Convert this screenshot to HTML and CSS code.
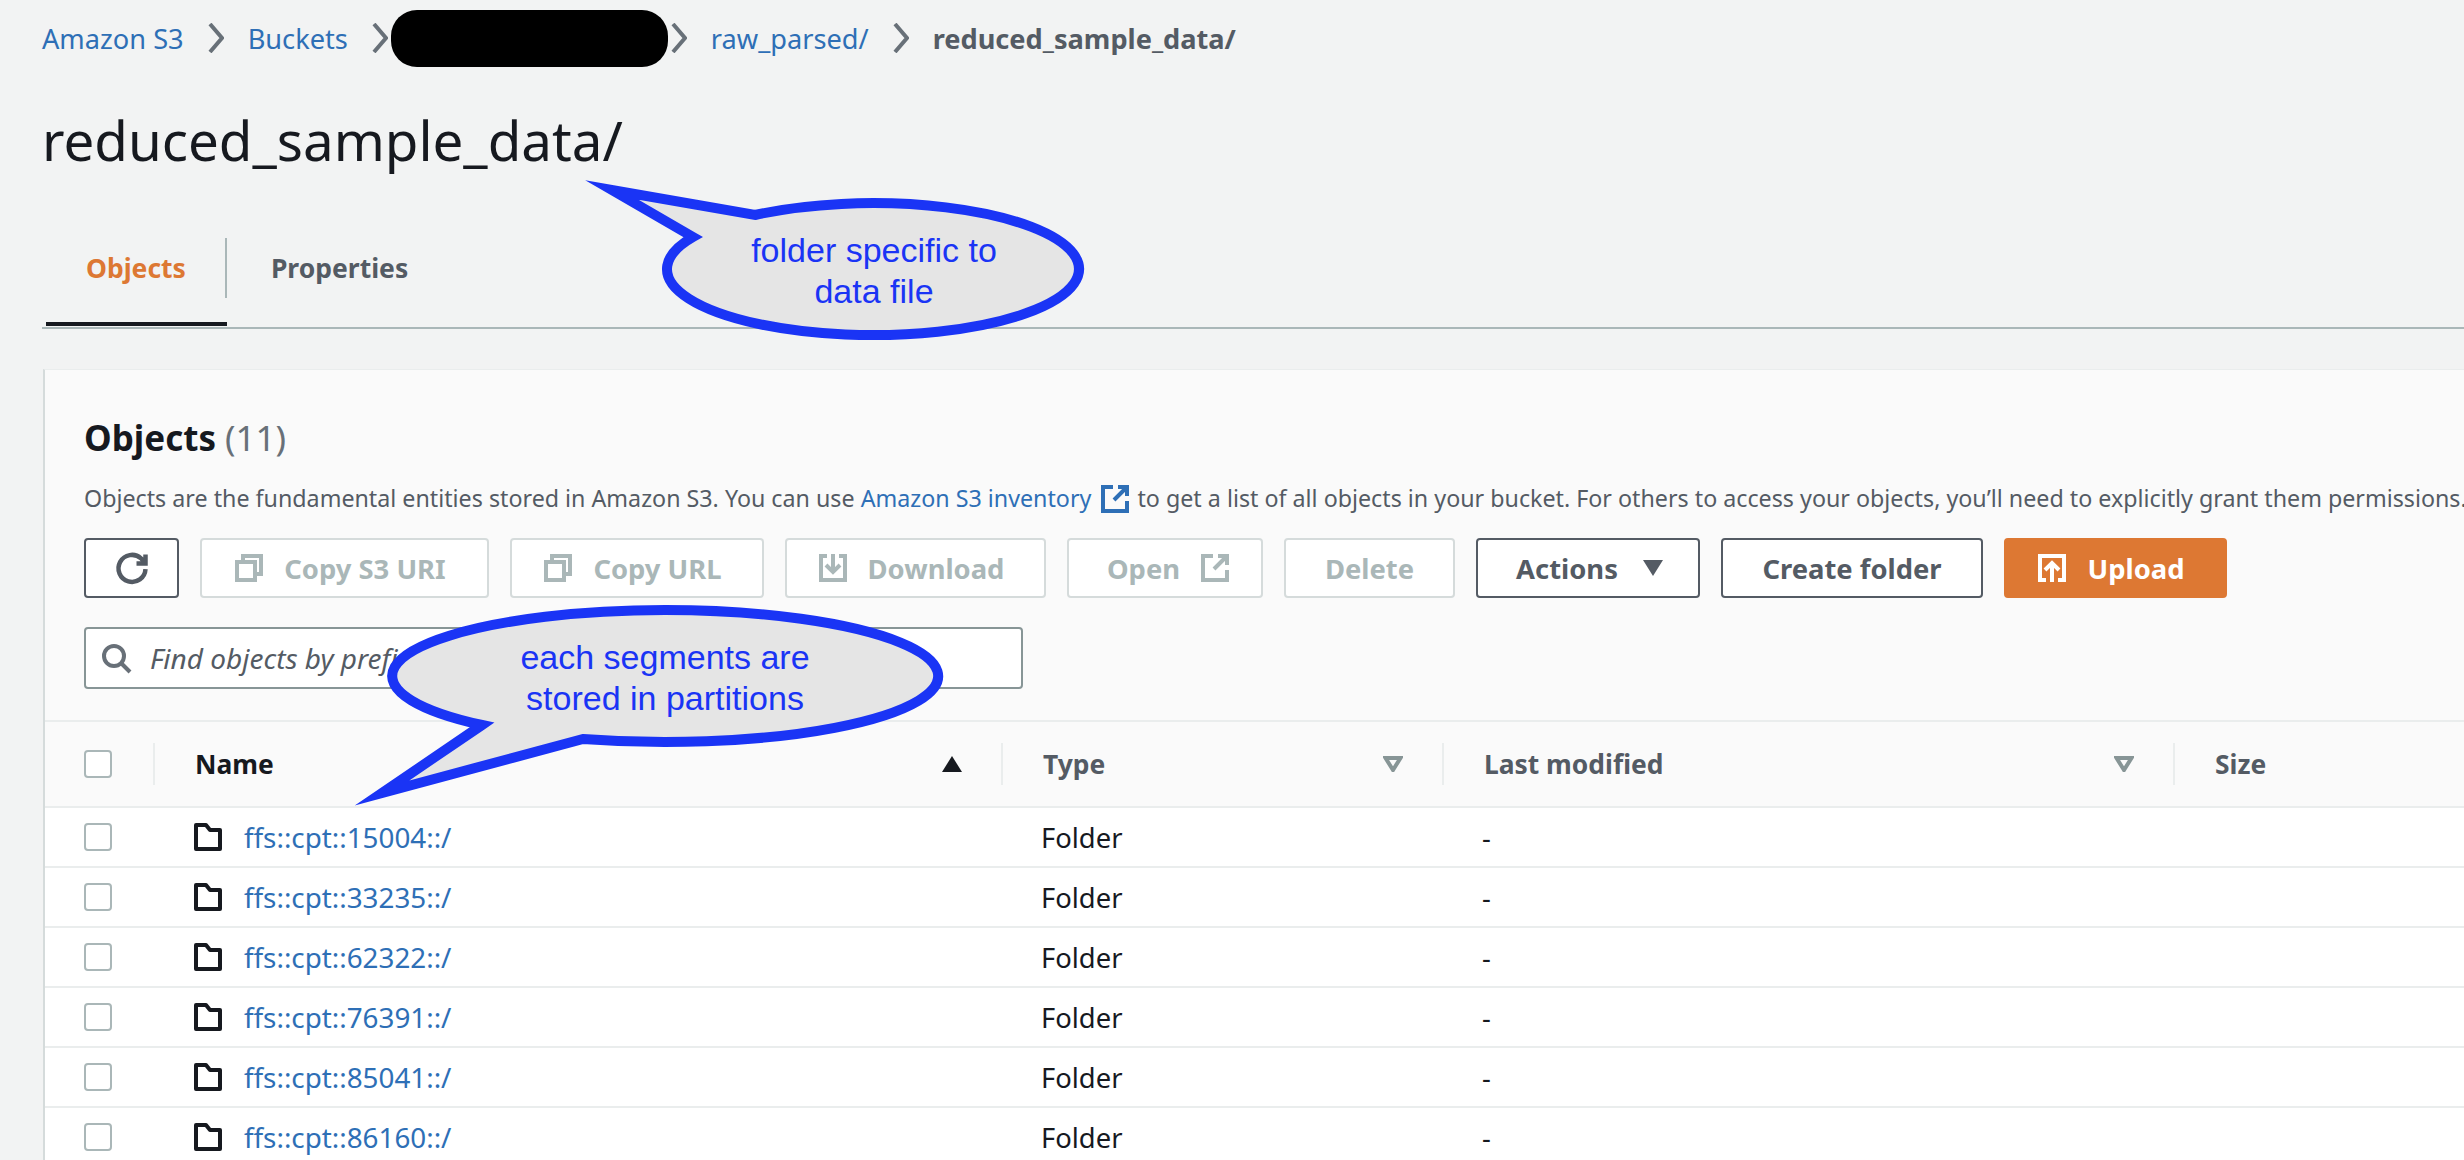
FILE: index.html
```html
<!DOCTYPE html>
<html lang="en">
<head>
    <meta charset="UTF-8">
    <title>reduced_sample_data/ - S3 bucket</title>
    <link rel="stylesheet" href="styles.css">
</head>
<body>
    <nav class="breadcrumbs">
        <a href="#">Amazon S3</a>
        <svg class="chevron" viewBox="0 0 16 30"><path d="M2 1l12 14L2 29"/></svg>
        <a href="#">Buckets</a>
        <svg class="chevron" viewBox="0 0 16 30"><path d="M2 1l12 14L2 29"/></svg>
        <span class="redacted"></span>
        <svg class="chevron" viewBox="0 0 16 30"><path d="M2 1l12 14L2 29"/></svg>
        <a href="#">raw_parsed/</a>
        <svg class="chevron" viewBox="0 0 16 30"><path d="M2 1l12 14L2 29"/></svg>
        <span class="current">reduced_sample_data/</span>
    </nav>

    <h1 class="page-title">reduced_sample_data/</h1>

    <div class="tabs">
        <div class="tab tab-active"><span class="tab-label">Objects</span></div>
        <div class="tab"><span class="tab-label">Properties</span></div>
    </div>

    <section class="panel">
        <div class="panel-head">
            <h2>Objects <span class="count">(11)</span></h2>
            <p class="desc">Objects are the fundamental entities stored in Amazon S3. You can use <a href="#">Amazon S3 inventory<svg class="icon ext-link" viewBox="0 0 16 16"><path d="M7 2H2v12h12V9M9.500 2H14v4.500M14 2L7.500 8.500"/></svg></a> to get a list of all objects in your bucket. For others to access your objects, you’ll need to explicitly grant them permissions.</p>

            <div class="toolbar">
                <button class="btn btn-refresh"><svg class="icon icon-lg" viewBox="0 0 16 16"><path d="M14 8.500a6 6 0 1 1-2-4.800L14 6M14 2v4h-4"/></svg></button>
                <button class="btn btn-copy-uri" disabled><svg class="icon icon-before" viewBox="0 0 16 16"><path d="M5 5V2h9v9h-3M2 5h9v9H2z"/></svg>Copy S3 URI</button>
                <button class="btn btn-copy-url" disabled><svg class="icon icon-before" viewBox="0 0 16 16"><path d="M5 5V2h9v9h-3M2 5h9v9H2z"/></svg>Copy URL</button>
                <button class="btn btn-download" disabled><svg class="icon icon-before" viewBox="0 0 16 16"><path d="M5 2H2v12h12V2h-3M8 1v9M4.500 6.500L8 10l3.500-3.500"/></svg>Download</button>
                <button class="btn btn-open" disabled>Open<svg class="icon icon-after" viewBox="0 0 16 16"><path d="M7 2H2v12h12V9M9.500 2H14v4.500M14 2L7.500 8.500"/></svg></button>
                <button class="btn btn-delete" disabled>Delete</button>
                <button class="btn btn-actions">Actions<svg class="caret" viewBox="0 0 20 16"><path d="M0 0h20L10 16z"/></svg></button>
                <button class="btn btn-create">Create folder</button>
                <button class="btn btn-primary"><svg class="icon icon-before" viewBox="0 0 16 16"><path d="M5 14H2V2h12v12h-3M8 15V6M4.500 9L8 5.500 11.500 9"/></svg>Upload</button>
            </div>

            <div class="search">
                <svg class="icon search-icon" viewBox="0 0 16 16"><circle cx="7" cy="7" r="5"/><path d="M10.500 10.500L15 15"/></svg>
                <input type="text" placeholder="Find objects by prefix">
            </div>
        </div>

        <div class="table">
            <div class="row row-head">
                <div class="cell"><span class="checkbox"></span><span class="sep"></span></div>
                <div class="cell"><span class="col-label col-dark">Name</span><svg class="sort" viewBox="0 0 20 16"><path d="M10 0l10 16H0z"/></svg><span class="sep"></span></div>
                <div class="cell"><span class="col-label">Type</span><svg class="filter" viewBox="0 0 20 16"><path d="M2.500 2h15L10 14z"/></svg><span class="sep"></span></div>
                <div class="cell"><span class="col-label">Last modified</span><svg class="filter" viewBox="0 0 20 16"><path d="M2.500 2h15L10 14z"/></svg><span class="sep"></span></div>
                <div class="cell"><span class="col-label">Size</span></div>
            </div>

            <div class="row">
                <div class="cell"><span class="checkbox"></span></div>
                <div class="cell"><svg class="icon folder" viewBox="0 0 16 16"><path d="M2 2h5l2 2.500h5V14H2z"/></svg><a class="object-link" href="#">ffs::cpt::15004::/</a></div>
                <div class="cell">Folder</div>
                <div class="cell">-</div>
                <div class="cell"></div>
            </div>
            <div class="row">
                <div class="cell"><span class="checkbox"></span></div>
                <div class="cell"><svg class="icon folder" viewBox="0 0 16 16"><path d="M2 2h5l2 2.500h5V14H2z"/></svg><a class="object-link" href="#">ffs::cpt::33235::/</a></div>
                <div class="cell">Folder</div>
                <div class="cell">-</div>
                <div class="cell"></div>
            </div>
            <div class="row">
                <div class="cell"><span class="checkbox"></span></div>
                <div class="cell"><svg class="icon folder" viewBox="0 0 16 16"><path d="M2 2h5l2 2.500h5V14H2z"/></svg><a class="object-link" href="#">ffs::cpt::62322::/</a></div>
                <div class="cell">Folder</div>
                <div class="cell">-</div>
                <div class="cell"></div>
            </div>
            <div class="row">
                <div class="cell"><span class="checkbox"></span></div>
                <div class="cell"><svg class="icon folder" viewBox="0 0 16 16"><path d="M2 2h5l2 2.500h5V14H2z"/></svg><a class="object-link" href="#">ffs::cpt::76391::/</a></div>
                <div class="cell">Folder</div>
                <div class="cell">-</div>
                <div class="cell"></div>
            </div>
            <div class="row">
                <div class="cell"><span class="checkbox"></span></div>
                <div class="cell"><svg class="icon folder" viewBox="0 0 16 16"><path d="M2 2h5l2 2.500h5V14H2z"/></svg><a class="object-link" href="#">ffs::cpt::85041::/</a></div>
                <div class="cell">Folder</div>
                <div class="cell">-</div>
                <div class="cell"></div>
            </div>
            <div class="row">
                <div class="cell"><span class="checkbox"></span></div>
                <div class="cell"><svg class="icon folder" viewBox="0 0 16 16"><path d="M2 2h5l2 2.500h5V14H2z"/></svg><a class="object-link" href="#">ffs::cpt::86160::/</a></div>
                <div class="cell">Folder</div>
                <div class="cell">-</div>
                <div class="cell"></div>
            </div>
        </div>
    </section>

    <!-- speech bubbles drawn over the screenshot -->
    <svg class="callouts" viewBox="0 0 2464 1160">
        <path class="bubble" d="M693 237L612 190L755 215A206 66 0 1 1 693 237Z"/>
        <text class="bubble-text" x="874" y="262">folder specific to</text>
        <text class="bubble-text" x="874" y="303">data file</text>
        <path class="bubble" d="M482 725L382 793L583 739A273 66 0 1 0 482 725Z"/>
        <text class="bubble-text" x="665" y="669">each segments are</text>
        <text class="bubble-text" x="665" y="710">stored in partitions</text>
    </svg>
</body>
</html>
```

FILE: styles.css
```css
* {
    box-sizing: border-box;
}

html, body {
    height: 1160px;
    overflow: hidden;
}

body {
    position: relative;
    margin: 0;
    background-color: #f2f3f3;
    color: #16191f;
    font-family: "Noto Sans", sans-serif;
    font-size: 28px;
}

a {
    color: #2e6fb6;
    text-decoration: none;
}

/* breadcrumbs */
.breadcrumbs {
    display: flex;
    align-items: center;
    gap: 24px;
    height: 76px;
    padding-left: 42px;
    font-size: 27.2px;
}

.chevron {
    width: 16px;
    height: 30px;
    fill: none;
    stroke: #687078;
    stroke-width: 4;
}

.redacted {
    width: 277px;
    height: 57px;
    margin: 0 -21px;
    border-radius: 26px;
    background-color: #000;
}

.current {
    color: #545b64;
    font-weight: 700;
}

.page-title {
    height: 64px;
    margin: 32px 0 0 42px;
    font-size: 54.7px;
    font-weight: 400;
    line-height: 64px;
}

/* tabs */
.tabs {
    display: flex;
    height: 101px;
    margin: 56px 0 0 42px;
    padding-left: 4px;
    border-bottom: 2px solid #aab7b8;
    font-size: 26.5px;
}

.tab {
    height: 98px;
    padding-top: 10px;
    color: #545b64;
    font-weight: 700;
}

.tab-label {
    display: block;
    height: 60px;
    padding: 0 44px;
    line-height: 60px;
}

.tab-active {
    color: #dd7833;
    border-bottom: 4px solid #16191f;
}

.tab-active .tab-label {
    padding: 0 39px 0 40px;
    border-right: 2px solid #aab7b8;
}

/* objects panel */
.panel {
    margin: 40px 0 0 43px;
    border-top: 1px solid #eaeded;
    border-left: 2px solid #d5dbdb;
    background-color: #fafafa;
}

.panel-head {
    padding: 48px 0 0 39px;
}

h2 {
    height: 40px;
    margin: 0;
    font-size: 35px;
    font-weight: 700;
    line-height: 40px;
}

.count {
    color: #687078;
    font-weight: 400;
}

.desc {
    height: 30px;
    margin: 25px 0 0;
    color: #545b64;
    font-size: 23.25px;
    line-height: 30px;
    white-space: nowrap;
}

.icon {
    flex: none;
    width: 32px;
    height: 32px;
    fill: none;
    stroke: currentColor;
    stroke-width: 2;
}

.ext-link {
    width: 32px;
    height: 32px;
    margin-left: 8px;
    vertical-align: -8px;
}

.toolbar {
    display: flex;
    gap: 21px;
    margin-top: 25px;
}

.btn {
    display: flex;
    align-items: center;
    justify-content: center;
    gap: 19px;
    height: 60px;
    padding: 0;
    border: 2px solid #545b64;
    border-radius: 4px;
    background-color: #fff;
    color: #545b64;
    font-family: inherit;
    font-size: 27.4px;
    font-weight: 700;
}

.btn:disabled {
    border-color: #d5dbdb;
    color: #aab7b8;
}

.btn-refresh { width: 95px; }
.btn-copy-uri { width: 289px; }
.btn-copy-url { width: 254px; }
.btn-download { width: 261px; }
.btn-open { width: 196px; }
.btn-delete { width: 171px; }
.btn-actions { width: 224px; gap: 25px; }
.btn-create { width: 262px; }
.btn-primary { width: 223px; }

.icon-before {
    margin-left: -10px;
}

.icon-after {
    margin-right: -8px;
}

.icon-lg {
    width: 36px;
    height: 36px;
}

.caret {
    width: 20px;
    height: 16px;
    margin-right: -3px;
    fill: #545b64;
}

.btn-primary {
    border-color: #dd7833;
    background-color: #dd7833;
    color: #fff;
}

.search {
    display: flex;
    align-items: center;
    gap: 16px;
    width: 939px;
    height: 62px;
    margin-top: 29px;
    padding-left: 14px;
    border: 2px solid #879596;
    border-radius: 4px;
    background-color: #fff;
}

.search-icon {
    color: #687078;
}

.search input {
    flex: 1;
    border: none;
    outline: none;
    background: none;
    font-family: inherit;
    font-size: 28px;
    font-style: italic;
}

.search input::placeholder {
    color: #545b64;
    opacity: 1;
}

/* table */
.table {
    margin-top: 31px;
    border-top: 2px solid #eaeded;
}

.row {
    display: grid;
    grid-template-columns: 110px 848px 441px 731px 1fr;
    height: 60px;
    border-bottom: 2px solid #eaeded;
    background-color: #fff;
    font-size: 27.4px;
}

.row-head {
    height: 86px;
    background-color: #fafafa;
    font-size: 26.4px;
    font-weight: 700;
}

.cell {
    display: flex;
    align-items: center;
    padding-left: 38px;
    white-space: nowrap;
}

.cell:first-child {
    padding-left: 39px;
}

.row-head .cell {
    padding-left: 40px;
}

.row-head .cell:first-child {
    padding-left: 39px;
}

.row .cell:nth-child(2) {
    padding-left: 37px;
}

.row-head .cell:nth-child(2) {
    padding-left: 40px;
}

.object-link {
    font-size: 27.8px;
}

.col-label {
    flex: 1;
    color: #545b64;
}

.col-dark {
    color: #16191f;
}

.sep {
    flex: none;
    width: 2px;
    height: 42px;
    background-color: #eaeded;
}

.row-head .cell:first-child .sep {
    margin-left: auto;
}

.sort {
    flex: none;
    width: 20px;
    height: 16px;
    margin-right: 39px;
    fill: #16191f;
}

.filter {
    flex: none;
    width: 20px;
    height: 16px;
    margin-right: 39px;
    fill: none;
    stroke: #879596;
    stroke-width: 4;
}

.checkbox {
    flex: none;
    width: 28px;
    height: 28px;
    border: 2px solid #aab7b8;
    border-radius: 4px;
    background-color: #fff;
}

.folder {
    margin-right: 20px;
    color: #16191f;
    stroke-linejoin: round;
}

/* callouts */
.callouts {
    position: absolute;
    top: 0;
    left: 0;
    width: 2464px;
    height: 1160px;
}

.bubble {
    fill: #e5e5e5;
    stroke: #1a34f5;
    stroke-width: 10;
    stroke-miterlimit: 10;
}

.bubble-text {
    fill: #1a34f5;
    font-family: "Liberation Sans", sans-serif;
    font-size: 34px;
    text-anchor: middle;
}
```
